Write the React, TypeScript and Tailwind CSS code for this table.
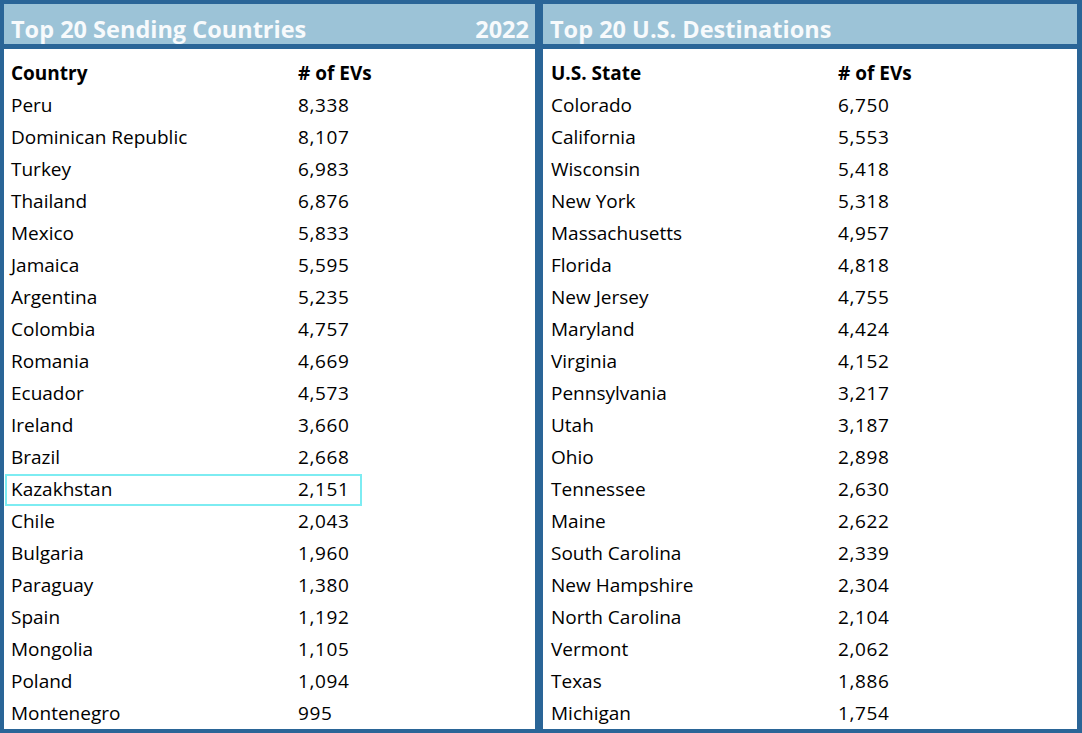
const countries: [string, string][] = [
  ["Peru", "8,338"],
  ["Dominican Republic", "8,107"],
  ["Turkey", "6,983"],
  ["Thailand", "6,876"],
  ["Mexico", "5,833"],
  ["Jamaica", "5,595"],
  ["Argentina", "5,235"],
  ["Colombia", "4,757"],
  ["Romania", "4,669"],
  ["Ecuador", "4,573"],
  ["Ireland", "3,660"],
  ["Brazil", "2,668"],
  ["Kazakhstan", "2,151"],
  ["Chile", "2,043"],
  ["Bulgaria", "1,960"],
  ["Paraguay", "1,380"],
  ["Spain", "1,192"],
  ["Mongolia", "1,105"],
  ["Poland", "1,094"],
  ["Montenegro", "995"],
];

const states: [string, string][] = [
  ["Colorado", "6,750"],
  ["California", "5,553"],
  ["Wisconsin", "5,418"],
  ["New York", "5,318"],
  ["Massachusetts", "4,957"],
  ["Florida", "4,818"],
  ["New Jersey", "4,755"],
  ["Maryland", "4,424"],
  ["Virginia", "4,152"],
  ["Pennsylvania", "3,217"],
  ["Utah", "3,187"],
  ["Ohio", "2,898"],
  ["Tennessee", "2,630"],
  ["Maine", "2,622"],
  ["South Carolina", "2,339"],
  ["New Hampshire", "2,304"],
  ["North Carolina", "2,104"],
  ["Vermont", "2,062"],
  ["Texas", "1,886"],
  ["Michigan", "1,754"],
];

function Panel({
  title,
  year,
  label,
  rows,
  width,
  pad,
  highlight,
}: {
  title: string;
  year?: string;
  label: string;
  rows: [string, string][];
  width: string;
  pad: string;
  highlight?: string;
}) {
  return (
    <div className={`flex flex-col shrink-0 ${width}`}>
      {/* Title bar */}
      <div className="h-[40px] bg-[#9cc3d7] flex items-start justify-between pl-[7px] pr-[6px] pt-[11px] text-[#f7fafc] font-bold text-[23.5px] leading-[28px] whitespace-nowrap overflow-hidden">
        <span>{title}</span>
        {year && <span>{year}</span>}
      </div>
      <div className="h-[5px]" />
      {/* Table body */}
      <div className="flex-1 bg-white pt-[8px] text-[19px] text-black overflow-hidden">
        <div className={`grid grid-cols-[287px_1fr] h-[32px] items-center ${pad} font-bold leading-[32px]`}>
          <span>{label}</span>
          <span># of EVs</span>
        </div>
        {rows.map(([name, val]) => (
          <div
            key={name}
            className={`grid grid-cols-[287px_1fr] h-[32px] items-center ${pad} leading-[32px] relative`}
          >
            {highlight === name && (
              <div className="absolute left-[1px] top-[1px] w-[357px] h-[32px] border-2 border-[#7decf2] pointer-events-none" />
            )}
            <span>{name}</span>
            <span className="tracking-[0.6px]">{val}</span>
          </div>
        ))}
      </div>
    </div>
  );
}

export default function App() {
  return (
    <div
      className="w-[1082px] h-[733px] bg-[#2a6597] pt-[4px] pb-[4px] pl-[4px] flex gap-[8px]"
      style={{ fontFamily: "'Open Sans', 'Liberation Sans', sans-serif" }}
    >
      <Panel
        title="Top 20 Sending Countries"
        year="2022"
        label="Country"
        rows={countries}
        width="w-[531px]"
        pad="pl-[7px]"
        highlight="Kazakhstan"
      />
      <Panel
        title="Top 20 U.S. Destinations"
        label="U.S. State"
        rows={states}
        width="w-[534px]"
        pad="pl-[8px]"
      />
    </div>
  );
}
